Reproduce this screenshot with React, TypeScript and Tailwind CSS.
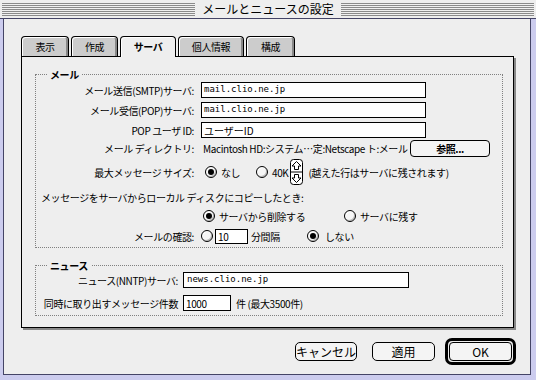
import React from "react";

const stripes =
  "h-[13px] flex-1 bg-[repeating-linear-gradient(to_bottom,#8a8a8a_0px,#8a8a8a_1px,#f0f0f0_1px,#f0f0f0_2px)]";

function Radio({ on }: { on?: boolean }) {
  return (
    <span className="w-[12px] h-[12px] shrink-0 rounded-full border border-black bg-[#f6f6f6] shadow-[inset_1px_1px_0_#ffffff,inset_-1px_-1px_0_#bbbbbb] flex items-center justify-center">
      {on ? <span className="w-[6px] h-[6px] rounded-full bg-black" /> : null}
    </span>
  );
}

function Stepper() {
  return (
    <svg width="13" height="26" viewBox="0 0 13 26" className="shrink-0">
      <rect x="0.5" y="0.5" width="12" height="25" rx="3" fill="#ffffff" stroke="#000" />
      <line x1="0.5" y1="13" x2="12.5" y2="13" stroke="#000" />
      <polygon points="6.5,2.5 11,7 8.5,7 8.5,10.5 4.5,10.5 4.5,7 2,7" fill="none" stroke="#000" />
      <polygon points="6.5,23.5 11,19 8.5,19 8.5,15.5 4.5,15.5 4.5,19 2,19" fill="none" stroke="#000" />
    </svg>
  );
}

function Tab({ label, w, active }: { label: string; w: string; active?: boolean }) {
  return active ? (
    <div
      className={`${w} h-[21px] relative z-10 rounded-t-[4px] border border-b-0 border-black bg-[#eeeeee] shadow-[inset_1px_1px_0_#ffffff] flex items-center justify-center font-bold text-[10px] leading-none pb-[1px]`}
    >
      {label}
    </div>
  ) : (
    <div
      className={`${w} h-[20px] rounded-t-[4px] border border-b-0 border-black bg-[#cccccc] shadow-[inset_1px_1px_0_#ffffff,inset_-2px_0_0_#888888] flex items-center justify-center text-[10px] leading-none`}
    >
      {label}
    </div>
  );
}

export default function App() {
  return (
    <div className="w-[536px] h-[380px] bg-[#ccccee] flex flex-col font-['Noto_Sans_CJK_JP','Noto_Sans',sans-serif] text-black select-none">
      {/* title bar */}
      <div className="h-[19px] bg-[#eeeeee] border-b border-[#444466] flex items-center px-[2px]">
        <div className={stripes} />
        <div className="px-[7px] text-[12px] leading-none tracking-[0px]">メールとニュースの設定</div>
        <div className={stripes} />
      </div>
      {/* frame */}
      <div className="flex-1 pl-[3px] pr-[5px] pb-[5px] flex">
        <div className="flex-1 border-l border-r border-b border-[#444466] bg-[#eeeeee] pl-[17px] pt-[17px] flex flex-col text-[10px] tracking-[-0.4px]">
          {/* tabs */}
          <div className="h-[20px] flex items-start gap-[2px]">
            <Tab label="表示" w="w-[48px]" />
            <Tab label="作成" w="w-[47px]" />
            <Tab label="サーバ" w="w-[56px]" active />
            <Tab label="個人情報" w="w-[66px]" />
            <Tab label="構成" w="w-[49px]" />
          </div>
          {/* panel */}
          <div className="w-[493px] h-[272px] border border-black bg-[#eeeeee] shadow-[2px_2px_0_#888888] pl-[13px] pr-[10px] flex flex-col">
            {/* mail group */}
            <fieldset className="mt-[12px] border border-dotted border-[#808080] pb-[2px] flex flex-col">
              <legend className="ml-[11px] px-[3px] font-bold leading-[11px]">メール</legend>
              <div className="h-[20px] flex items-center">
                <div className="w-[158px] text-right">メール送信(SMTP)サーバ:</div>
                <div className="ml-[7px] w-[225px] h-[16px] border border-black bg-white flex items-center pl-[2px] font-['DejaVu_Sans_Mono',monospace] text-[9px] tracking-[0px]">mail.clio.ne.jp</div>
              </div>
              <div className="h-[20px] flex items-center">
                <div className="w-[158px] text-right">メール受信(POP)サーバ:</div>
                <div className="ml-[7px] w-[225px] h-[16px] border border-black bg-white flex items-center pl-[2px] font-['DejaVu_Sans_Mono',monospace] text-[9px] tracking-[0px]">mail.clio.ne.jp</div>
              </div>
              <div className="h-[20px] flex items-center">
                <div className="w-[158px] text-right">POP ユーザ ID:</div>
                <div className="ml-[7px] w-[225px] h-[16px] border border-black bg-white flex items-center pl-[2px] tracking-[0px]">ユーザーID</div>
              </div>
              <div className="h-[17px] flex items-center">
                <div className="w-[158px] text-right">メール ディレクトリ:</div>
                <div className="ml-[9px] w-[207px] whitespace-nowrap overflow-hidden">Macintosh HD:システム…定:Netscape ト:メール</div>
                <div className="w-[80px] h-[17px] rounded-[4px] border border-black bg-[#f4f4f4] flex items-center justify-center font-bold">参照...</div>
              </div>
              <div className="mt-[2px] h-[26px] flex items-center">
                <div className="w-[158px] text-right">最大メッセージ サイズ:</div>
                <div className="ml-[11px] w-[51px] flex items-center gap-[4px]">
                  <Radio on />
                  <span>なし</span>
                </div>
                <div className="flex items-center gap-[4px]">
                  <Radio />
                  <span>40K</span>
                </div>
                <div className="ml-[2px]">
                  <Stepper />
                </div>
                <span className="ml-[5px]">(越えた行はサーバに残されます)</span>
              </div>
              <div className="mt-[4px] h-[16px] flex items-center pl-[5px]">
                メッセージをサーバからローカル ディスクにコピーしたとき:
              </div>
              <div className="mt-[2px] h-[18px] flex items-center pl-[167px]">
                <div className="w-[141px] flex items-center gap-[4px]">
                  <Radio on />
                  <span>サーバから削除する</span>
                </div>
                <div className="flex items-center gap-[4px]">
                  <Radio />
                  <span>サーバに残す</span>
                </div>
              </div>
              <div className="mt-[2px] h-[18px] flex items-center">
                <div className="w-[158px] text-right">メールの確認:</div>
                <div className="ml-[7px]">
                  <Radio />
                </div>
                <div className="ml-[2px] w-[33px] h-[15px] border border-black bg-white flex items-center pl-[2px]">10</div>
                <span className="ml-[3px] w-[56px]">分間隔</span>
                <div className="flex items-center gap-[6px]">
                  <Radio on />
                  <span>しない</span>
                </div>
              </div>
            </fieldset>
            {/* news group */}
            <fieldset className="mt-[12px] border border-dotted border-[#808080] pb-[3px] flex flex-col">
              <legend className="ml-[11px] px-[3px] font-bold leading-[11px]">ニュース</legend>
              <div className="h-[18px] flex items-center">
                <div className="w-[142px] text-right">ニュース(NNTP)サーバ:</div>
                <div className="ml-[5px] w-[226px] h-[16px] border border-black bg-white flex items-center pl-[3px] font-['DejaVu_Sans_Mono',monospace] text-[9px] tracking-[0px]">news.clio.ne.jp</div>
              </div>
              <div className="mt-[5px] h-[18px] flex items-center">
                <div className="w-[142px] text-right">同時に取り出すメッセージ件数</div>
                <div className="ml-[5px] w-[48px] h-[16px] border border-black bg-white flex items-center pl-[2px]">1000</div>
                <span className="ml-[5px]">件 (最大3500件)</span>
              </div>
            </fieldset>
          </div>
          {/* buttons */}
          <div className="mt-[10px] w-[495px] flex items-center justify-end text-[12px] tracking-[0px]">
            <div className="w-[62px] h-[19px] rounded-[5px] border border-black bg-[#f4f4f4] flex items-center justify-center leading-none">キャンセル</div>
            <div className="ml-[15px] w-[63px] h-[19px] rounded-[5px] border border-black bg-[#f4f4f4] flex items-center justify-center leading-none">適用</div>
            <div className="ml-[10px] w-[71px] h-[27px] rounded-[7px] border-[3px] border-black p-[1px] flex">
              <div className="flex-1 rounded-[4px] border border-black bg-[#f4f4f4] flex items-center justify-center leading-none">OK</div>
            </div>
          </div>
        </div>
      </div>
    </div>
  );
}
